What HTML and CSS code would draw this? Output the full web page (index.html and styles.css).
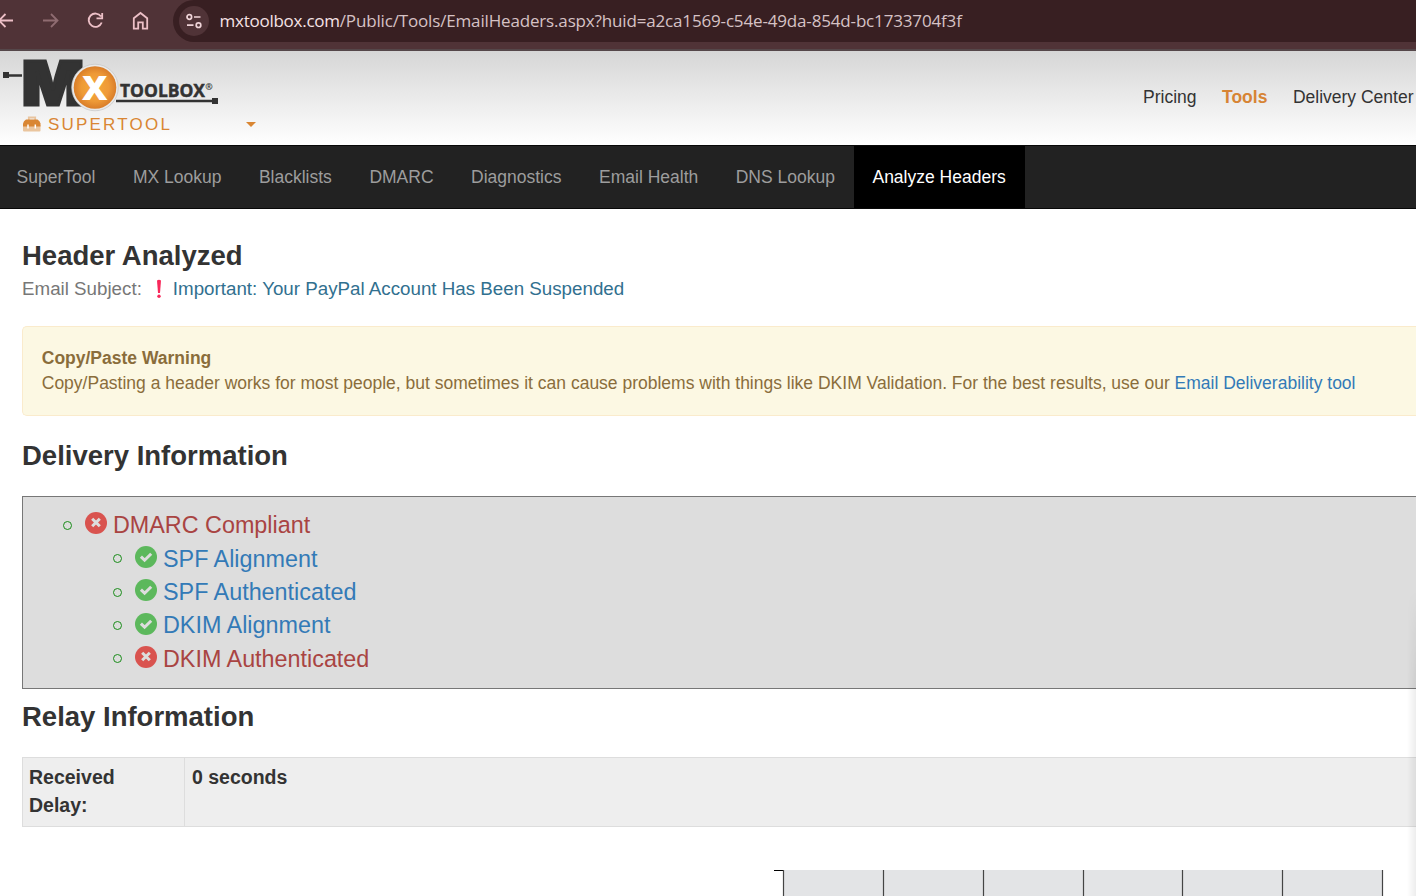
FILE: index.html
```html
<!DOCTYPE html>
<html lang="en">
<head>
<meta charset="utf-8">
<title>Email Header Analyzer</title>
<link rel="stylesheet" href="styles.css">
</head>
<body>
<svg class="defs" width="0" height="0">
  <symbol id="bad" viewBox="0 0 22 22"><circle cx="11" cy="11" r="11" fill="#d9534f"/><path d="M7.200 6.700l7.600 7.600M14.800 6.700l-7.600 7.600" stroke="#ddd" stroke-width="3"/></symbol>
  <symbol id="good" viewBox="0 0 22 22"><circle cx="11" cy="11" r="11" fill="#5cb85c"/><path d="M5.900 10.600l3.700 3.600 6.600-6.500" fill="none" stroke="#ddd" stroke-width="3"/></symbol>
</svg>
<div class="browser">
  <svg class="controls" width="172" height="42" viewBox="0 0 172 42" fill="none" stroke="#edc0c7" stroke-width="1.800">
    <path d="M13 20.500H0M5.500 14L-1 20.500L5.500 27"/>
    <path d="M43 20.500H57M51 14l6.500 6.500L51 27" stroke="#8f6c71"/>
    <path d="M101 16.500A6.700 6.700 0 1 0 101.700 22.500M102.200 13v5.300h-5.700"/>
    <path d="M133.800 28.700V18.300L140.500 13l6.700 5.300V28.700H142.800V22.300H138.200V28.700Z"/>
  </svg>
  <div class="address">
    <svg width="30" height="30" viewBox="0 0 30 30" fill="none" stroke="#f0d5d9" stroke-width="1.700"><circle cx="15" cy="15" r="15" fill="#503337" stroke="none"/><circle cx="10.300" cy="11" r="2.300"/><path d="M15 11h6.500M8 19.200h6.500"/><circle cx="19.500" cy="19.200" r="2.300"/></svg>
    <div class="url"><span class="host">mxtoolbox.com</span>/Public/Tools/EmailHeaders.aspx?huid=a2ca1569-c54e-49da-854d-bc1733704f3f</div>
  </div>
</div>
<header class="masthead">
  <div class="brand">
    <svg class="logo" width="222" height="62" viewBox="0 0 222 62">
      <defs><radialGradient id="orb"><stop offset="0" stop-color="#f6aa3a"/><stop offset=".65" stop-color="#ee9a37"/><stop offset="1" stop-color="#d97d29"/></radialGradient></defs>
      <path d="M3 21h6v6H3zM9 23.200h13v2.500H9zM116 48.700h97v2.500h-97zM212 47h6v6h-6z" fill="#333"/>
      <text class="logo-m" x="22" y="53.500" textLength="62" lengthAdjust="spacingAndGlyphs">M</text>
      <circle cx="95" cy="36.500" r="23.300" fill="#e9e9e9" stroke="#c6c6c6" stroke-width=".7"/>
      <circle cx="95" cy="36.500" r="21.300" fill="url(#orb)"/>
      <text class="logo-x" x="82" y="48.500" textLength="25.500" lengthAdjust="spacingAndGlyphs">X</text>
      <text class="logo-word" x="120" y="45.500" textLength="85" lengthAdjust="spacingAndGlyphs">TOOLBOX</text>
      <text class="logo-reg" x="205.300" y="39">®</text>
    </svg>
    <div class="product">
      <svg width="18" height="16" viewBox="0 0 18 16"><path d="M5.800 4V1.500h6.400V4" fill="none" stroke="#e8c49f" stroke-width="1.800"/><path d="M0 9h17.500v5.500q0 1-1 1H1q-1 0-1-1z" fill="#eac59e"/><path d="M3 3.500h11.500q2.500 1.500 3 4v3H0v-3q.5-2.500 3-4z" fill="#d98633"/><path d="M5 8.500v4M12.300 8.500v4" stroke="#fff" stroke-width="1.500"/></svg>
      <span class="supertool">SUPERTOOL</span><i class="caret"></i>
    </div>
  </div>
  <nav class="top-links"><a>Pricing</a><a class="current">Tools</a><a>Delivery Center</a></nav>
</header>
<nav class="toolbar"><a>SuperTool</a><a>MX Lookup</a><a>Blacklists</a><a>DMARC</a><a>Diagnostics</a><a>Email Health</a><a>DNS Lookup</a><a class="active">Analyze Headers</a></nav>
<main>
  <h1 class="title">Header Analyzed</h1>
  <div class="subject"><span>Email Subject:</span><svg width="6" height="20" viewBox="0 0 6 20"><path d="M1 1.500q2-1.500 4 0L4 14H2z" fill="#f8285a"/><circle cx="3" cy="17.200" r="1.700" fill="#f8285a"/></svg><a>Important: Your PayPal Account Has Been Suspended</a></div>
  <section class="warning"><strong>Copy/Paste Warning</strong><p>Copy/Pasting a header works for most people, but sometimes it can cause problems with things like DKIM Validation. For the best results, use our <a>Email Deliverability tool</a></p></section>
  <h2 class="title delivery">Delivery Information</h2>
  <ul class="results">
    <li class="fail"><i></i><svg><use href="#bad"/></svg><a>DMARC Compliant</a></li>
    <li class="sub"><i></i><svg><use href="#good"/></svg><a>SPF Alignment</a></li>
    <li class="sub"><i></i><svg><use href="#good"/></svg><a>SPF Authenticated</a></li>
    <li class="sub"><i></i><svg><use href="#good"/></svg><a>DKIM Alignment</a></li>
    <li class="sub fail"><i></i><svg><use href="#bad"/></svg><a>DKIM Authenticated</a></li>
  </ul>
  <h2 class="title relay">Relay Information</h2>
  <div class="delay"><div class="label">Received Delay:</div><div class="value">0 seconds</div></div>
  <svg class="chart" width="612" height="26" viewBox="0 0 612 26"><path d="M9 0h600v26H9z" fill="#e3e4e6"/><path d="M0 .5h9" stroke="#000"/><path d="M9.500 0v26M109.500 0v26M209.500 0v26M309.500 0v26M408.500 0v26M508.500 0v26M608.500 0v26" stroke="#444" stroke-width="1.200"/></svg>
</main>
<div class="edge-shadow"></div>
</body>
</html>
```
FILE: styles.css
```css
* { box-sizing: border-box; }
body { margin: 0; width: 1416px; height: 896px; overflow: hidden; position: relative; background: #fff; color: #333; font: 17.5px/25px "Liberation Sans", Arial, sans-serif; }
.defs { position: absolute; }
p, h1, h2, ul { margin: 0; padding: 0; }
.browser { height: 51px; background: #503337; border-bottom: 2px solid #55474a; display: flex; align-items: flex-start; }
.controls { flex: none; }
.address { flex: 1; height: 42px; margin-left: 1px; background: #381f22; border-radius: 21px 0 0 21px; display: flex; align-items: center; padding: 0 0 0 6px; }
.address svg { flex: none; }
.url { margin-left: 10.500px; font: 17px/24px "Open Sans", sans-serif; color: #d6c2c5; white-space: nowrap; letter-spacing: -.16px; }
.host { color: #f6e3e6; letter-spacing: -.25px; }
.masthead { height: 94px; display: flex; justify-content: space-between; background: linear-gradient(#d6d6d6, #fff); }
.brand { width: 270px; }
.logo { display: block; }
.logo-m { font: 900 61px Inter, sans-serif; fill: #333; stroke: #333; stroke-width: 3px; }
.logo-x { font: 800 33px "Open Sans", sans-serif; fill: #fff; }
.logo-word { font: 700 18px "Open Sans", sans-serif; fill: #333; stroke: #333; stroke-width: .5px; }
.logo-reg { font: 700 9px "Open Sans", sans-serif; fill: #333; }
.product { display: flex; align-items: center; height: 22px; padding-left: 23px; color: #d98633; }
.supertool { width: 198px; margin-left: 7px; font-size: 17px; letter-spacing: 2.2px; }
.caret { border: 5px solid transparent; border-top-color: #d98633; border-bottom: 0; }
.top-links { display: flex; gap: 25.500px; padding: 34px 2.500px 0 0; }
.current { color: #d78434; font-weight: bold; }
.toolbar { height: 64px; background: #222; border: solid #080808; border-width: 1px 0; display: flex; color: #9d9d9d; }
.toolbar a { padding: 19px 18.750px 0; }
.toolbar a:first-child { padding-left: 16.600px; }
.toolbar .active { background: #000; color: #fff; }
main { padding: 31px 0 0 22px; }
.title { font-size: 27.500px; line-height: 32px; font-weight: bold; }
.subject { display: flex; align-items: center; height: 33px; font-size: 18.750px; color: #777; }
.subject svg { margin: 0 10.500px 0 14.500px; }
.subject a { color: #31708f; }
.warning { height: 90px; margin-top: 21px; padding: 18.500px 18.750px; border: 1px solid #faebcc; border-right: 0; border-radius: 5px 0 0 5px; background: #fcf8e3; color: #8a6d3b; }
.warning p { white-space: nowrap; }
.warning a, .results a { color: #337ab7; }
.delivery { margin-top: 24px; }
.results { list-style: none; height: 193px; margin-top: 24px; padding: 12.200px 0 0 40px; border: 1px solid #777; border-right: 0; background: #ddd; font-size: 23.350px; line-height: 33.400px; }
.results li { display: flex; align-items: center; height: 33.400px; }
.results .sub { padding-left: 50px; }
.results i { width: 9px; height: 9px; border: 1px solid #198c19; border-radius: 50%; margin: 0 13px 1px 0; }
.results svg { width: 22px; height: 22px; margin: -5px 6px 0 0; }
.results .fail a { color: #a94442; }
.relay { margin-top: 12px; }
.delay { display: flex; height: 70px; margin-top: 24px; border: 1px solid #ddd; border-right: 0; background: #eee; font-size: 19.500px; line-height: 28px; font-weight: bold; }
.label { width: 162px; padding: 5px 60px 5px 6px; border-right: 1px solid #ddd; }
.value { padding: 5px 7px; }
.chart { display: block; margin: 43px 0 0 752px; }
.edge-shadow { position: absolute; right: 0; top: 590px; width: 9px; height: 306px; background: linear-gradient(to right, transparent, rgba(0, 0, 0, .07)); mask-image: linear-gradient(transparent, #000 100px); }
```
